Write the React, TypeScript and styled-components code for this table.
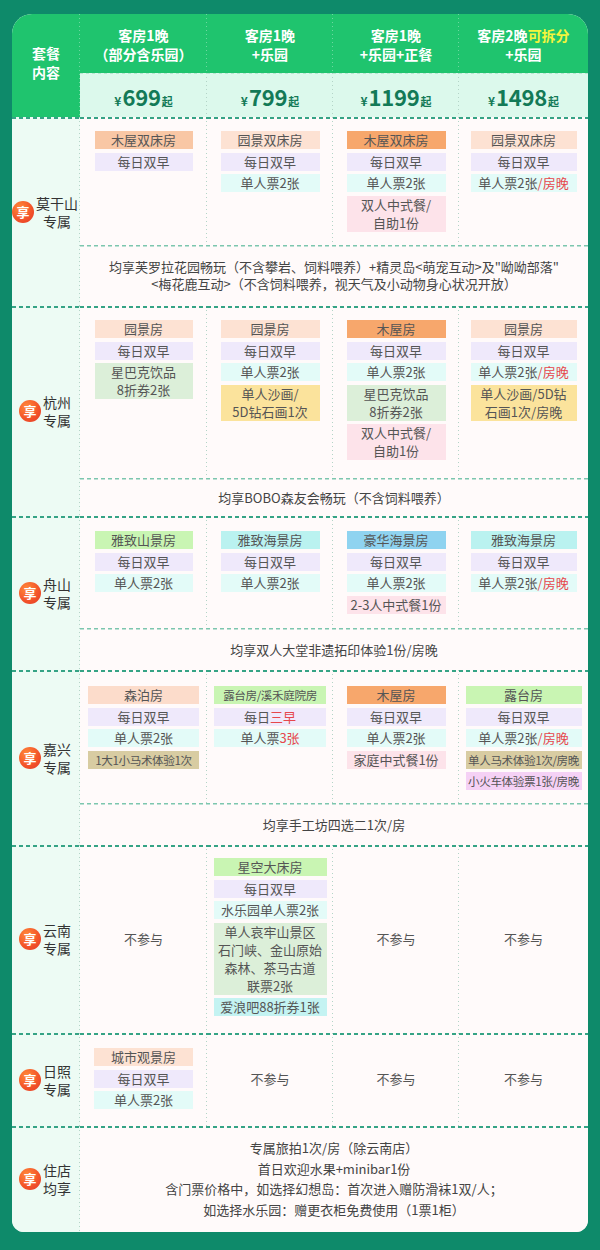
import React from "react";
import styled, { createGlobalStyle } from "styled-components";

const GlobalStyle = createGlobalStyle`
  html, body { margin: 0; padding: 0; background: #0e8a6a; }
  body { font-family: "Noto Sans CJK SC", "Noto Sans", sans-serif; }
`;

const DASH = "repeating-linear-gradient(90deg, #35a385 0 4px, transparent 4px 7px) left top / 100% 2px no-repeat";
const DASH_L = "repeating-linear-gradient(90deg, #7cc6ae 0 4px, transparent 4px 7px) left top / 100% 1.5px no-repeat";
const DOT = "repeating-linear-gradient(180deg, #b3d4c7 0 1.2px, transparent 1.2px 4px) right top / 1px 100% no-repeat";
const DOT_W = "repeating-linear-gradient(180deg, rgba(255,255,255,0.35) 0 1.2px, transparent 1.2px 4px) right top / 1px 100% no-repeat";
const CELL_BG = "#fffafa";
const LABEL_BG = "#edfbf4";

const Page = styled.div`
  padding: 14px 12px 18px;
`;

const Card = styled.div`
  width: 576px;
  border-radius: 20px 20px 12px 12px;
  overflow: hidden;
  background: ${CELL_BG};
`;

const Head = styled.div`
  display: grid;
  grid-template-columns: 68px 127px 126px 126px 129px;
  grid-template-rows: 59px 44px;
  background: #1fc46e;
`;

const HeadCorner = styled.div`
  grid-row: 1 / span 2;
  display: flex;
  align-items: center;
  justify-content: center;
  padding-bottom: 6px;
  text-align: center;
  color: #fff;
  font-weight: 700;
  font-size: 14px;
  line-height: 19px;
  background: ${DOT_W};
`;

const HeadTitle = styled.div<{ $last?: boolean }>`
  display: flex;
  align-items: center;
  justify-content: center;
  text-align: center;
  color: #fff;
  font-weight: 700;
  font-size: 14px;
  line-height: 19px;
  padding-top: 2px;
  background: ${(p) => (p.$last ? "none" : DOT_W)};
`;

const Yellow = styled.span`
  color: #f3f53c;
`;

const PriceCell = styled.div<{ $last?: boolean }>`
  display: flex;
  align-items: center;
  justify-content: center;
  padding-top: 2px;
  background: ${(p) =>
    `repeating-linear-gradient(90deg, #b9e6d1 0 3px, transparent 3px 6px) left top / 100% 1px no-repeat, ${
      p.$last ? "" : DOT + ","
    } #dcf9ec`};
  color: #137a57;
  font-weight: 700;
`;

const Yen = styled.span`
  font-size: 12px;
  margin-right: 1px;
`;

const Num = styled.span`
  font-size: 22px;
  letter-spacing: -0.2px;
`;

const Qi = styled.span`
  font-size: 11px;
  margin-left: 1px;
  align-self: flex-end;
  margin-bottom: 3px;
`;

const Price = styled.div`
  display: flex;
  align-items: baseline;
`;

const Section = styled.div`
  display: grid;
  grid-template-columns: 68px 508px;
`;

const Label = styled.div`
  display: flex;
  align-items: center;
  justify-content: center;
  gap: 2px;
  padding-right: 2px;
  background: ${DASH}, ${DOT}, ${LABEL_BG};
`;

const Badge = styled.div`
  width: 22px;
  height: 22px;
  flex: none;
  border-radius: 50%;
  background: radial-gradient(circle at 35% 30%, #ff8a3a 0%, #f4552a 55%, #e23a26 100%);
  color: #fff;
  font-size: 13px;
  font-weight: 700;
  line-height: 22px;
  text-align: center;
`;

const LabelText = styled.div`
  font-size: 14px;
  line-height: 18px;
  color: #333;
  text-align: center;
`;

const Body = styled.div`
  display: flex;
  flex-direction: column;
`;

const Cells = styled.div<{ $h: number }>`
  display: grid;
  grid-template-columns: 127px 126px 126px 129px;
  height: ${(p) => p.$h}px;
`;

const Cell = styled.div<{ $last?: boolean; $pt: number; $none?: boolean }>`
  display: flex;
  flex-direction: column;
  align-items: center;
  justify-content: ${(p) => (p.$none ? "center" : "flex-start")};
  gap: 3.5px;
  padding-top: ${(p) => (p.$none ? 0 : p.$pt)}px;
  background: ${(p) => `${DASH}, ${p.$last ? "" : DOT + ","} ${CELL_BG}`};
`;

const Tag = styled.div<{ $w: number; $bg: string; $small?: boolean }>`
  width: ${(p) => p.$w}px;
  background: ${(p) => p.$bg};
  color: #555;
  font-size: ${(p) => (p.$small ? "11.6px" : "13px")};
  letter-spacing: ${(p) => (p.$small ? "-0.4px" : "0")};
  line-height: 18px;
  text-align: center;
  white-space: nowrap;
`;

const NotIn = styled.div`
  font-size: 13px;
  color: #555;
  margin-top: -2px;
`;

const Red = styled.span`
  color: #e6474c;
`;

const Shared = styled.div<{ $h: number; $heavy?: boolean; $lh: number }>`
  height: ${(p) => p.$h}px;
  display: flex;
  flex-direction: column;
  align-items: center;
  justify-content: center;
  text-align: center;
  font-size: 13px;
  line-height: ${(p) => p.$lh}px;
  color: #444;
  background: ${(p) => (p.$heavy ? DASH : DASH_L)}, ${CELL_BG};
`;

const ORANGE = "#f7a76c";
const PEACH = "#f9c7a5";
const LPEACH = "#fde2d3";
const LAV = "#efe9fb";
const CYAN_L = "#e3fbf8";
const PINK = "#fde3ea";
const SAGE = "#dcefd9";
const YEL = "#fbe39c";
const LGREEN = "#c9f5b3";
const CYAN = "#baf2f0";
const BLUE = "#8fd3f0";
const KHAKI = "#d8cca2";
const ORCHID = "#f5d1f5";
const AQUA = "#c4f3f2";

type TagData = { t: React.ReactNode; bg: string; small?: boolean };
type CellData = { w?: number; tags?: TagData[] };
type SectionData = {
  name: [string, string];
  cellH: number;
  pt: number;
  cells: CellData[];
  shared?: React.ReactNode[];
  sharedH?: number;
  sharedLh?: number;
};

const zao: TagData = { t: "每日双早", bg: LAV };
const piao: TagData = { t: "单人票2张", bg: CYAN_L };
const piaoWan: TagData = {
  t: (
    <>
      单人票2张<Red>/房晚</Red>
    </>
  ),
  bg: CYAN_L,
};
const canyin: TagData = {
  t: (
    <>
      双人中式餐/
      <br />
      自助1份
    </>
  ),
  bg: PINK,
};
const xbk: TagData = {
  t: (
    <>
      星巴克饮品
      <br />
      8折券2张
    </>
  ),
  bg: SAGE,
};

const sections: SectionData[] = [
  {
    name: ["莫干山", "专属"],
    cellH: 128,
    pt: 14,
    cells: [
      { w: 98, tags: [{ t: "木屋双床房", bg: PEACH }, zao] },
      { w: 99, tags: [{ t: "园景双床房", bg: LPEACH }, zao, piao] },
      { w: 99, tags: [{ t: "木屋双床房", bg: ORANGE }, zao, piao, canyin] },
      { w: 106, tags: [{ t: "园景双床房", bg: LPEACH }, zao, piaoWan] },
    ],
    shared: [
      <>均享芙罗拉花园畅玩（不含攀岩、饲料喂养）+精灵岛&lt;萌宠互动&gt;及"呦呦部落"</>,
      <>&lt;梅花鹿互动&gt;（不含饲料喂养，视天气及小动物身心状况开放）</>,
    ],
    sharedH: 61,
    sharedLh: 16.5,
  },
  {
    name: ["杭州", "专属"],
    cellH: 172,
    pt: 14,
    cells: [
      { w: 98, tags: [{ t: "园景房", bg: LPEACH }, zao, xbk] },
      {
        w: 99,
        tags: [
          { t: "园景房", bg: LPEACH },
          zao,
          piao,
          {
            t: (
              <>
                单人沙画/
                <br />
                5D钻石画1次
              </>
            ),
            bg: YEL,
          },
        ],
      },
      { w: 99, tags: [{ t: "木屋房", bg: ORANGE }, zao, piao, xbk, canyin] },
      {
        w: 106,
        tags: [
          { t: "园景房", bg: LPEACH },
          zao,
          piaoWan,
          {
            t: (
              <>
                单人沙画/5D钻
                <br />
                石画1次/房晚
              </>
            ),
            bg: YEL,
          },
        ],
      },
    ],
    shared: ["均享BOBO森友会畅玩（不含饲料喂养）"],
    sharedH: 38,
    sharedLh: 17,
  },
  {
    name: ["舟山", "专属"],
    cellH: 112,
    pt: 15,
    cells: [
      { w: 98, tags: [{ t: "雅致山景房", bg: LGREEN }, zao, piao] },
      { w: 99, tags: [{ t: "雅致海景房", bg: CYAN }, zao, piao] },
      { w: 99, tags: [{ t: "豪华海景房", bg: BLUE }, zao, piao, { t: "2-3人中式餐1份", bg: PINK }] },
      { w: 106, tags: [{ t: "雅致海景房", bg: CYAN }, zao, piaoWan] },
    ],
    shared: ["均享双人大堂非遗拓印体验1份/房晚"],
    sharedH: 42,
    sharedLh: 17,
  },
  {
    name: ["嘉兴", "专属"],
    cellH: 133,
    pt: 16,
    cells: [
      {
        w: 111,
        tags: [{ t: "森泊房", bg: "#fcdccb" }, zao, piao, { t: "1大1小马术体验1次", bg: KHAKI, small: true }],
      },
      {
        w: 112,
        tags: [
          { t: "露台房/溪禾庭院房", bg: LGREEN, small: true },
          {
            t: (
              <>
                每日<Red>三早</Red>
              </>
            ),
            bg: LAV,
          },
          {
            t: (
              <>
                单人票<Red>3张</Red>
              </>
            ),
            bg: CYAN_L,
          },
        ],
      },
      { w: 99, tags: [{ t: "木屋房", bg: ORANGE }, zao, piao, { t: "家庭中式餐1份", bg: PINK }] },
      {
        w: 116,
        tags: [
          { t: "露台房", bg: LGREEN },
          zao,
          piaoWan,
          { t: "单人马术体验1次/房晚", bg: KHAKI, small: true },
          { t: "小火车体验票1张/房晚", bg: ORCHID, small: true },
        ],
      },
    ],
    shared: ["均享手工坊四选二1次/房"],
    sharedH: 42,
    sharedLh: 17,
  },
  {
    name: ["云南", "专属"],
    cellH: 188,
    pt: 13,
    cells: [
      {},
      {
        w: 113,
        tags: [
          { t: "星空大床房", bg: LGREEN },
          zao,
          { t: "水乐园单人票2张", bg: CYAN_L },
          {
            t: (
              <>
                单人哀牢山景区
                <br />
                石门峡、金山原始
                <br />
                森林、茶马古道
                <br />
                联票2张
              </>
            ),
            bg: SAGE,
          },
          { t: "爱浪吧88折券1张", bg: AQUA },
        ],
      },
      {},
      {},
    ],
  },
  {
    name: ["日照", "专属"],
    cellH: 93,
    pt: 15,
    cells: [
      { w: 99, tags: [{ t: "城市观景房", bg: LPEACH }, zao, piao] },
      {},
      {},
      {},
    ],
  },
];

const titles: React.ReactNode[] = [
  <>
    客房1晚
    <br />
    （部分含乐园）
  </>,
  <>
    客房1晚
    <br />
    +乐园
  </>,
  <>
    客房1晚
    <br />
    +乐园+正餐
  </>,
  <>
    客房2晚<Yellow>可拆分</Yellow>
    <br />
    +乐园
  </>,
];

const prices = ["699", "799", "1199", "1498"];

export default function App() {
  return (
    <>
      <GlobalStyle />
      <Page>
        <Card>
          <Head>
            <HeadCorner>
              套餐
              <br />
              内容
            </HeadCorner>
            {titles.map((t, i) => (
              <HeadTitle key={i} $last={i === 3}>
                <div>{t}</div>
              </HeadTitle>
            ))}
            {prices.map((p, i) => (
              <PriceCell key={p} $last={i === 3}>
                <Price>
                  <Yen>¥</Yen>
                  <Num>{p}</Num>
                  <Qi>起</Qi>
                </Price>
              </PriceCell>
            ))}
          </Head>

          {sections.map((s) => (
            <Section key={s.name[0]}>
              <Label>
                <Badge>享</Badge>
                <LabelText>
                  {s.name[0]}
                  <br />
                  {s.name[1]}
                </LabelText>
              </Label>
              <Body>
                <Cells $h={s.cellH}>
                  {s.cells.map((c, i) => (
                    <Cell key={i} $last={i === 3} $pt={s.pt} $none={!c.tags}>
                      {c.tags ? (
                        c.tags.map((t, j) => (
                          <Tag key={j} $w={c.w || 99} $bg={t.bg} $small={t.small}>
                            {t.t}
                          </Tag>
                        ))
                      ) : (
                        <NotIn>不参与</NotIn>
                      )}
                    </Cell>
                  ))}
                </Cells>
                {s.shared && (
                  <Shared $h={s.sharedH || 40} $lh={s.sharedLh || 17}>
                    {s.shared.map((line, k) => (
                      <div key={k}>{line}</div>
                    ))}
                  </Shared>
                )}
              </Body>
            </Section>
          ))}

          <Section>
            <Label>
              <Badge>享</Badge>
              <LabelText>
                住店
                <br />
                均享
              </LabelText>
            </Label>
            <Shared $h={106} $heavy $lh={20.5}>
              <div>专属旅拍1次/房（除云南店）</div>
              <div>首日欢迎水果+minibar1份</div>
              <div>含门票价格中，如选择幻想岛：首次进入赠防滑袜1双/人；</div>
              <div>如选择水乐园：赠更衣柜免费使用（1票1柜）</div>
            </Shared>
          </Section>
        </Card>
      </Page>
    </>
  );
}
